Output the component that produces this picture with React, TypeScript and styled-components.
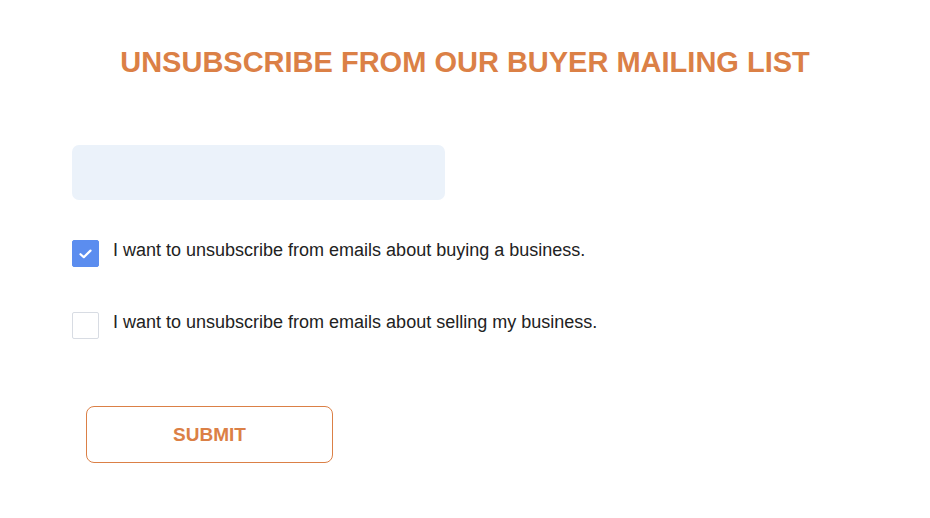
import React, { useState } from "react";
import styled, { createGlobalStyle } from "styled-components";

const Global = createGlobalStyle`
  html, body { margin: 0; padding: 0; background: #ffffff; }
  body { font-family: "Liberation Sans", Arial, sans-serif; }
  * { box-sizing: border-box; }
`;

const Page = styled.div`
  width: 930px;
  height: 518px;
  padding: 44px 0 0 72px;
  display: flex;
  flex-direction: column;
  align-items: flex-start;
`;

const Title = styled.h1`
  margin: 0 0 0 -72px;
  width: 930px;
  text-align: center;
  font-size: 29px;
  font-weight: 700;
  color: #db8046;
  line-height: 36px;
`;

const EmailInput = styled.input`
  margin-top: 65px;
  width: 373px;
  height: 55px;
  border: none;
  border-radius: 7px;
  background: #ebf2fa;
  outline: none;
  padding: 0 16px;
  font-family: inherit;
  font-size: 16px;
`;

const Options = styled.div`
  margin-top: 40px;
  display: flex;
  flex-direction: column;
  gap: 45px;
`;

const Row = styled.label`
  display: flex;
  align-items: center;
  gap: 14px;
  cursor: pointer;
`;

const Box = styled.span<{ $checked: boolean }>`
  width: 27px;
  height: 27px;
  border-radius: 2px;
  display: flex;
  align-items: center;
  justify-content: center;
  background: ${(p) => (p.$checked ? "#5b8def" : "#ffffff")};
  border: 1px solid ${(p) => (p.$checked ? "#5b8def" : "#d8dce3")};
`;

const Label = styled.span`
  font-size: 18px;
  line-height: 20px;
  color: #222222;
  margin-top: -8px;
`;

const SubmitButton = styled.button`
  margin: 67px 0 0 14px;
  width: 247px;
  height: 57px;
  border: 1px solid #db8046;
  border-radius: 8px;
  background: #ffffff;
  color: #db8046;
  font-family: inherit;
  font-size: 19px;
  font-weight: 700;
  cursor: pointer;
`;

const Check = () => (
  <svg width="13" height="10" viewBox="0 0 13 10" fill="none">
    <path d="M1.5 5.2 L4.8 8.2 L11.5 1.6" stroke="#fff" strokeWidth="2.2" strokeLinecap="round" strokeLinejoin="round" />
  </svg>
);

export default function App() {
  const [buy, setBuy] = useState(true);
  const [sell, setSell] = useState(false);
  return (
    <>
      <Global />
      <Page>
        <Title>UNSUBSCRIBE FROM OUR BUYER MAILING LIST</Title>
        <EmailInput type="email" />
        <Options>
          <Row onClick={() => setBuy(!buy)}>
            <Box $checked={buy}>{buy && <Check />}</Box>
            <Label>I want to unsubscribe from emails about buying a business.</Label>
          </Row>
          <Row onClick={() => setSell(!sell)}>
            <Box $checked={sell}>{sell && <Check />}</Box>
            <Label>I want to unsubscribe from emails about selling my business.</Label>
          </Row>
        </Options>
        <SubmitButton>SUBMIT</SubmitButton>
      </Page>
    </>
  );
}
